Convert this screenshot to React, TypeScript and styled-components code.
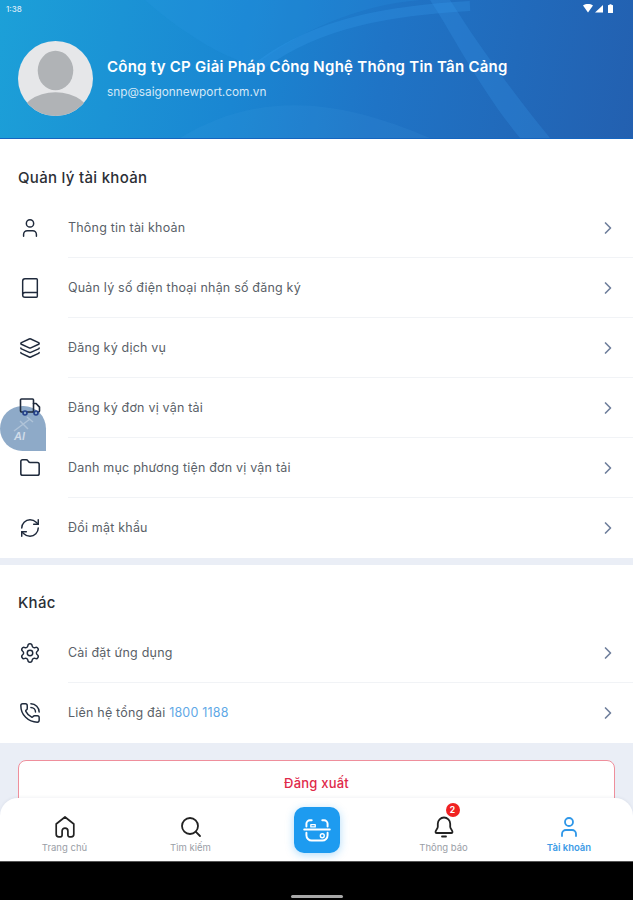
import * as React from 'react'
import styled, { createGlobalStyle } from 'styled-components'
import {
  User,
  Book,
  Layers,
  Folder,
  RefreshCw,
  Settings,
  PhoneCall,
  ChevronRight,
  Search,
} from 'lucide-react'

const GlobalStyle = createGlobalStyle`
  html, body {
    margin: 0;
    padding: 0;
    background: #000;
    font-family: Inter, "Noto Sans", "Liberation Sans", sans-serif;
  }
  * { box-sizing: border-box; }
`

const Screen = styled.div`
  position: relative;
  width: 633px;
  height: 900px;
  overflow: hidden;
  background: #eaeef6;
  display: flex;
  flex-direction: column;
`

const Hero = styled.header`
  position: relative;
  height: 139px;
  flex: none;
  overflow: hidden;
  background: linear-gradient(100deg, #1ca0d8 0%, #1a86d2 38%, #1f74c6 60%, #2360b0 100%);
  border-bottom: 1px solid #1565c0;
`

const HeroWaves = styled.svg`
  position: absolute;
  inset: 0;
  width: 100%;
  height: 100%;
`

const StatusBar = styled.div`
  position: relative;
  height: 18px;
  padding: 0 19px 0 6px;
  display: flex;
  align-items: center;
  justify-content: space-between;
  color: #dcecf8;
  font-size: 8px;
  font-weight: 500;
`

const StatusIcons = styled.svg`
  width: 31px;
  height: 12px;
  display: block;
`

const Profile = styled.div`
  position: relative;
  display: flex;
  align-items: center;
  gap: 14px;
  padding: 23px 0 0 18px;
`

const Avatar = styled.svg`
  width: 75px;
  height: 75px;
  flex: none;
  display: block;
`

const ProfileText = styled.div`
  display: flex;
  flex-direction: column;
  gap: 9px;
`

const CompanyName = styled.div`
  color: #fff;
  font-size: 15px;
  line-height: 18px;
  font-weight: 600;
  letter-spacing: 0.25px;
`

const Email = styled.div`
  color: #d5e8f7;
  font-size: 11.8px;
  line-height: 14px;
`

const Section = styled.section`
  flex: none;
  background: #fff;
  padding-left: 18px;
`

const SectionTitle = styled.h2<{ $height: number }>`
  margin: 0;
  height: ${({ $height }) => $height}px;
  padding-bottom: 10px;
  display: flex;
  align-items: flex-end;
  color: #2b2f36;
  font-size: 15px;
  line-height: 20px;
  font-weight: 500;
  letter-spacing: 0.3px;
`

const RowList = styled.ul`
  margin: 0;
  padding: 0;
  list-style: none;
`

const Row = styled.li`
  height: 60px;
  display: flex;
  align-items: center;
  color: #1f2a3c;
`

const RowIcon = styled.span`
  position: relative;
  z-index: 2;
  width: 50px;
  flex: none;
  display: flex;
  align-items: center;
  svg {
    display: block;
    margin-left: 1px;
  }
`

const RowBody = styled.div<{ $last: boolean }>`
  flex: 1;
  height: 100%;
  display: flex;
  align-items: center;
  justify-content: space-between;
  padding-right: 15px;
  border-bottom: 1px solid ${({ $last }) => ($last ? 'transparent' : '#f1f3f6')};
`

const RowLabel = styled.span`
  color: #5a5f68;
  font-size: 12.5px;
  letter-spacing: 0.2px;
`

const Hotline = styled.span`
  color: #5fa8e6;
`

const Arrow = styled(ChevronRight)`
  color: #6f7f9c;
`

const LogoutArea = styled.div`
  flex: 1;
  padding: 17px 18px 0;
  background: #eaeef6;
`

const LogoutButton = styled.button`
  width: 100%;
  height: 46px;
  padding: 0;
  background: #fff;
  border: 1px solid #ef8f9c;
  border-radius: 8px;
  color: #e0294a;
  font: 500 13px Inter, "Noto Sans", sans-serif;
  letter-spacing: 0.2px;
`

const SectionGap = styled.div`
  flex: none;
  height: 7px;
  background: #eaeef6;
`

const TabBar = styled.nav`
  position: absolute;
  left: 0;
  right: 0;
  bottom: 39px;
  height: 63px;
  display: grid;
  grid-template-columns: 129px 123px 130px 123px 128px;
  background: #fff;
  border-radius: 18px 18px 0 0;
  box-shadow: 0 -1px 3px rgba(30, 50, 90, 0.06);
`

const Tab = styled.div<{ $active?: boolean }>`
  position: relative;
  display: flex;
  flex-direction: column;
  align-items: center;
  padding-top: 17px;
  gap: 3px;
  color: ${({ $active }) => ($active ? '#2f97e8' : '#222')};
`

const TabIcon = styled.span`
  position: relative;
  height: 24px;
  display: block;
  svg {
    display: block;
  }
`

const TabLabel = styled.span<{ $active?: boolean }>`
  color: ${({ $active }) => ($active ? '#3d9be6' : '#9a9ea6')};
  font-size: 9.5px;
  line-height: 12px;
  font-weight: ${({ $active }) => ($active ? 600 : 400)};
`

const ScanButton = styled.div`
  width: 46px;
  height: 46px;
  margin: 9px auto 0;
  border-radius: 10px;
  background: #1d9bf0;
  box-shadow: 0 2px 8px rgba(29, 155, 240, 0.35);
  display: flex;
  align-items: center;
  justify-content: center;
`

const Badge = styled.span`
  position: absolute;
  top: -12px;
  right: -4px;
  width: 14px;
  height: 14px;
  border-radius: 50%;
  background: #f02222;
  color: #fff;
  font-size: 8.5px;
  line-height: 14px;
  font-weight: 700;
  text-align: center;
`

const NavBar = styled.div`
  position: absolute;
  left: 0;
  right: 0;
  bottom: 0;
  height: 39px;
  background: #000;
  border-top: 1px solid #555;
  display: flex;
  justify-content: center;
`

const HomeIndicator = styled.div`
  width: 52px;
  height: 3px;
  margin-top: 33px;
  border-radius: 2px;
  background: #a8a8a8;
`

const FloatingBubble = styled.div`
  position: absolute;
  z-index: 1;
  left: 0;
  top: 406px;
  width: 46px;
  height: 45px;
  border-radius: 23px 23px 0 23px;
  background: rgba(122, 155, 190, 0.85);
  display: flex;
  align-items: center;
  justify-content: center;
`

const BubbleArt = styled.svg`
  width: 30px;
  height: 30px;
  display: block;
`

const BubbleText = styled.text`
  fill: #d0dce9;
  font-size: 11px;
  font-weight: 600;
  font-style: italic;
  font-family: Inter, sans-serif;
`

const HomeIcon = () => (
  <svg width="24" height="24" viewBox="0 0 24 24" fill="none" stroke="currentColor" strokeWidth="1.7" strokeLinejoin="round" strokeLinecap="round">
    <path d="M12 2 3.2 9v10.2a2.6 2.6 0 0 0 2.6 2.6h1.6a1.7 1.7 0 0 0 1.7-1.7V16a2.9 2.9 0 0 1 5.8 0v4.1a1.7 1.7 0 0 0 1.7 1.7h1.6a2.6 2.6 0 0 0 2.6-2.6V9z" />
  </svg>
)

const BellIcon = () => (
  <svg width="24" height="24" viewBox="0 0 24 24" fill="none" stroke="currentColor" strokeWidth="1.8" strokeLinejoin="round" strokeLinecap="round">
    <path d="M12 2.5a6.2 6.2 0 0 0-6.2 6.2v3c0 2-2.3 3.4-2.3 5.2 0 .7.5 1.1 1.1 1.1h14.8c.6 0 1.1-.4 1.1-1.1 0-1.8-2.3-3.2-2.3-5.2v-3A6.2 6.2 0 0 0 12 2.5z" />
    <path d="M10 21.5h4" />
  </svg>
)

const ScanIcon = () => (
  <svg width="30" height="30" viewBox="0 0 34 34" fill="none" stroke="#fff" strokeWidth="2.2" strokeLinecap="round" strokeLinejoin="round">
    <path d="M5 13V10a4 4 0 0 1 4-4h2" />
    <path d="M29 13V10a4 4 0 0 0-4-4h-2" />
    <path d="M2.5 16.5h29" />
    <path d="M5 20v3a6 6 0 0 0 6 6h12a6 6 0 0 0 6-6v-3" />
    <circle cx="23" cy="23.5" r="2.2" strokeWidth="1.6" />
    <path d="M10 11h5v2.5h-5z" strokeWidth="1.5" />
  </svg>
)

const TruckIcon = () => (
  <svg width="22" height="22" viewBox="0 0 22 22" fill="none" stroke="currentColor" strokeWidth="1.6" strokeLinejoin="round" strokeLinecap="round">
    <path d="M4 15H2.5a1 1 0 0 1-1-1V3a1 1 0 0 1 1-1h11a1 1 0 0 1 1 1v12H8" />
    <path d="M14.5 6.5h2.6l3.4 3.6V14a1 1 0 0 1-1 1H19" />
    <path d="M14.5 15h1" />
    <circle cx="6" cy="16" r="2" stroke="#24408a" />
    <circle cx="17" cy="16" r="2" stroke="#24408a" />
  </svg>
)

const accountRows = [
  { icon: <User size={22} strokeWidth={1.6} />, label: 'Thông tin tài khoản' },
  { icon: <Book size={22} strokeWidth={1.6} />, label: 'Quản lý số điện thoại nhận số đăng ký' },
  { icon: <Layers size={22} strokeWidth={1.6} />, label: 'Đăng ký dịch vụ' },
  { icon: <TruckIcon />, label: 'Đăng ký đơn vị vận tải' },
  { icon: <Folder size={22} strokeWidth={1.7} />, label: 'Danh mục phương tiện đơn vị vận tải' },
  { icon: <RefreshCw size={22} strokeWidth={1.6} />, label: 'Đổi mật khẩu' },
]

const otherRows = [
  { icon: <Settings size={22} strokeWidth={1.6} />, label: 'Cài đặt ứng dụng' },
  {
    icon: <PhoneCall size={22} strokeWidth={1.6} />,
    label: (
      <>
        Liên hệ tổng đài <Hotline>1800 1188</Hotline>
      </>
    ),
  },
]

type RowData = { icon: React.ReactNode; label: React.ReactNode }

const Rows: React.FC<{ rows: RowData[] }> = ({ rows }) => (
  <RowList>
    {rows.map((row, index) => (
      <Row key={index}>
        <RowIcon>{row.icon}</RowIcon>
        <RowBody $last={index === rows.length - 1}>
          <RowLabel>{row.label}</RowLabel>
          <Arrow size={20} strokeWidth={2} />
        </RowBody>
      </Row>
    ))}
  </RowList>
)

const App: React.FC = () => (
  <Screen>
    <GlobalStyle />
    <Hero>
      <HeroWaves viewBox="0 0 633 139" preserveAspectRatio="none">
        <path d="M145 0 C190 40 230 60 255 66 C300 30 360 5 420 0 Z" fill="#2f9be8" opacity="0.18" />
        <path d="M260 66 C320 20 400 10 470 6" stroke="#36a0f0" strokeWidth="10" fill="none" opacity="0.25" />
        <path d="M430 0 C450 30 480 90 520 139 L550 139 C510 90 475 40 450 0 Z" fill="#3b9ef0" opacity="0.22" />
        <path d="M180 139 C260 90 340 100 430 139 Z" fill="#4aa6ea" opacity="0.12" />
      </HeroWaves>
      <StatusBar>
        <span>1:38</span>
        <StatusIcons viewBox="0 0 31 12">
          <path d="M0 2.5 C3 0.6 7 0.6 10 2.5 L5 9.5 Z" fill="#fff" />
          <path d="M12 9.5 L20 2 V9.5 Z" fill="#fff" />
          <path d="M25.5 2 h1 v-0.8 h2 v0.8 h1 a0.5 0.5 0 0 1 0.5 0.5 v7 a0.5 0.5 0 0 1 -0.5 0.5 h-4 a0.5 0.5 0 0 1 -0.5 -0.5 v-7 a0.5 0.5 0 0 1 0.5 -0.5z" fill="#fff" />
        </StatusIcons>
      </StatusBar>
      <Profile>
        <Avatar viewBox="0 0 76 76">
          <defs>
            <clipPath id="avatar-clip">
              <circle cx="38" cy="38" r="38" />
            </clipPath>
          </defs>
          <g clipPath="url(#avatar-clip)">
            <rect width="76" height="76" fill="#e6e7e9" />
            <ellipse cx="38" cy="30" rx="18" ry="20" fill="#b0b3b6" />
            <ellipse cx="38" cy="78" rx="36" ry="26" fill="#b0b3b6" />
          </g>
        </Avatar>
        <ProfileText>
          <CompanyName>Công ty CP Giải Pháp Công Nghệ Thông Tin Tân Cảng</CompanyName>
          <Email>snp@saigonnewport.com.vn</Email>
        </ProfileText>
      </Profile>
    </Hero>

    <Section>
      <SectionTitle $height={59}>Quản lý tài khoản</SectionTitle>
      <Rows rows={accountRows} />
    </Section>
    <SectionGap />
    <Section>
      <SectionTitle $height={58}>Khác</SectionTitle>
      <Rows rows={otherRows} />
    </Section>
    <LogoutArea>
      <LogoutButton>Đăng xuất</LogoutButton>
    </LogoutArea>

    <FloatingBubble>
      <BubbleArt viewBox="0 0 30 30">
        <path d="M6 17 22 5M12 7l8 8M19 3l6 5" stroke="#c4d3e3" strokeWidth="1.5" fill="none" opacity="0.6" />
        <BubbleText x="6" y="26">AI</BubbleText>
      </BubbleArt>
    </FloatingBubble>

    <TabBar>
      <Tab>
        <TabIcon><HomeIcon /></TabIcon>
        <TabLabel>Trang chủ</TabLabel>
      </Tab>
      <Tab>
        <TabIcon><Search size={24} strokeWidth={1.8} /></TabIcon>
        <TabLabel>Tìm kiếm</TabLabel>
      </Tab>
      <div>
        <ScanButton><ScanIcon /></ScanButton>
      </div>
      <Tab>
        <TabIcon>
          <BellIcon />
          <Badge>2</Badge>
        </TabIcon>
        <TabLabel>Thông báo</TabLabel>
      </Tab>
      <Tab $active>
        <TabIcon><User size={24} strokeWidth={1.8} /></TabIcon>
        <TabLabel $active>Tài khoản</TabLabel>
      </Tab>
    </TabBar>
    <NavBar>
      <HomeIndicator />
    </NavBar>
  </Screen>
)

export default App
